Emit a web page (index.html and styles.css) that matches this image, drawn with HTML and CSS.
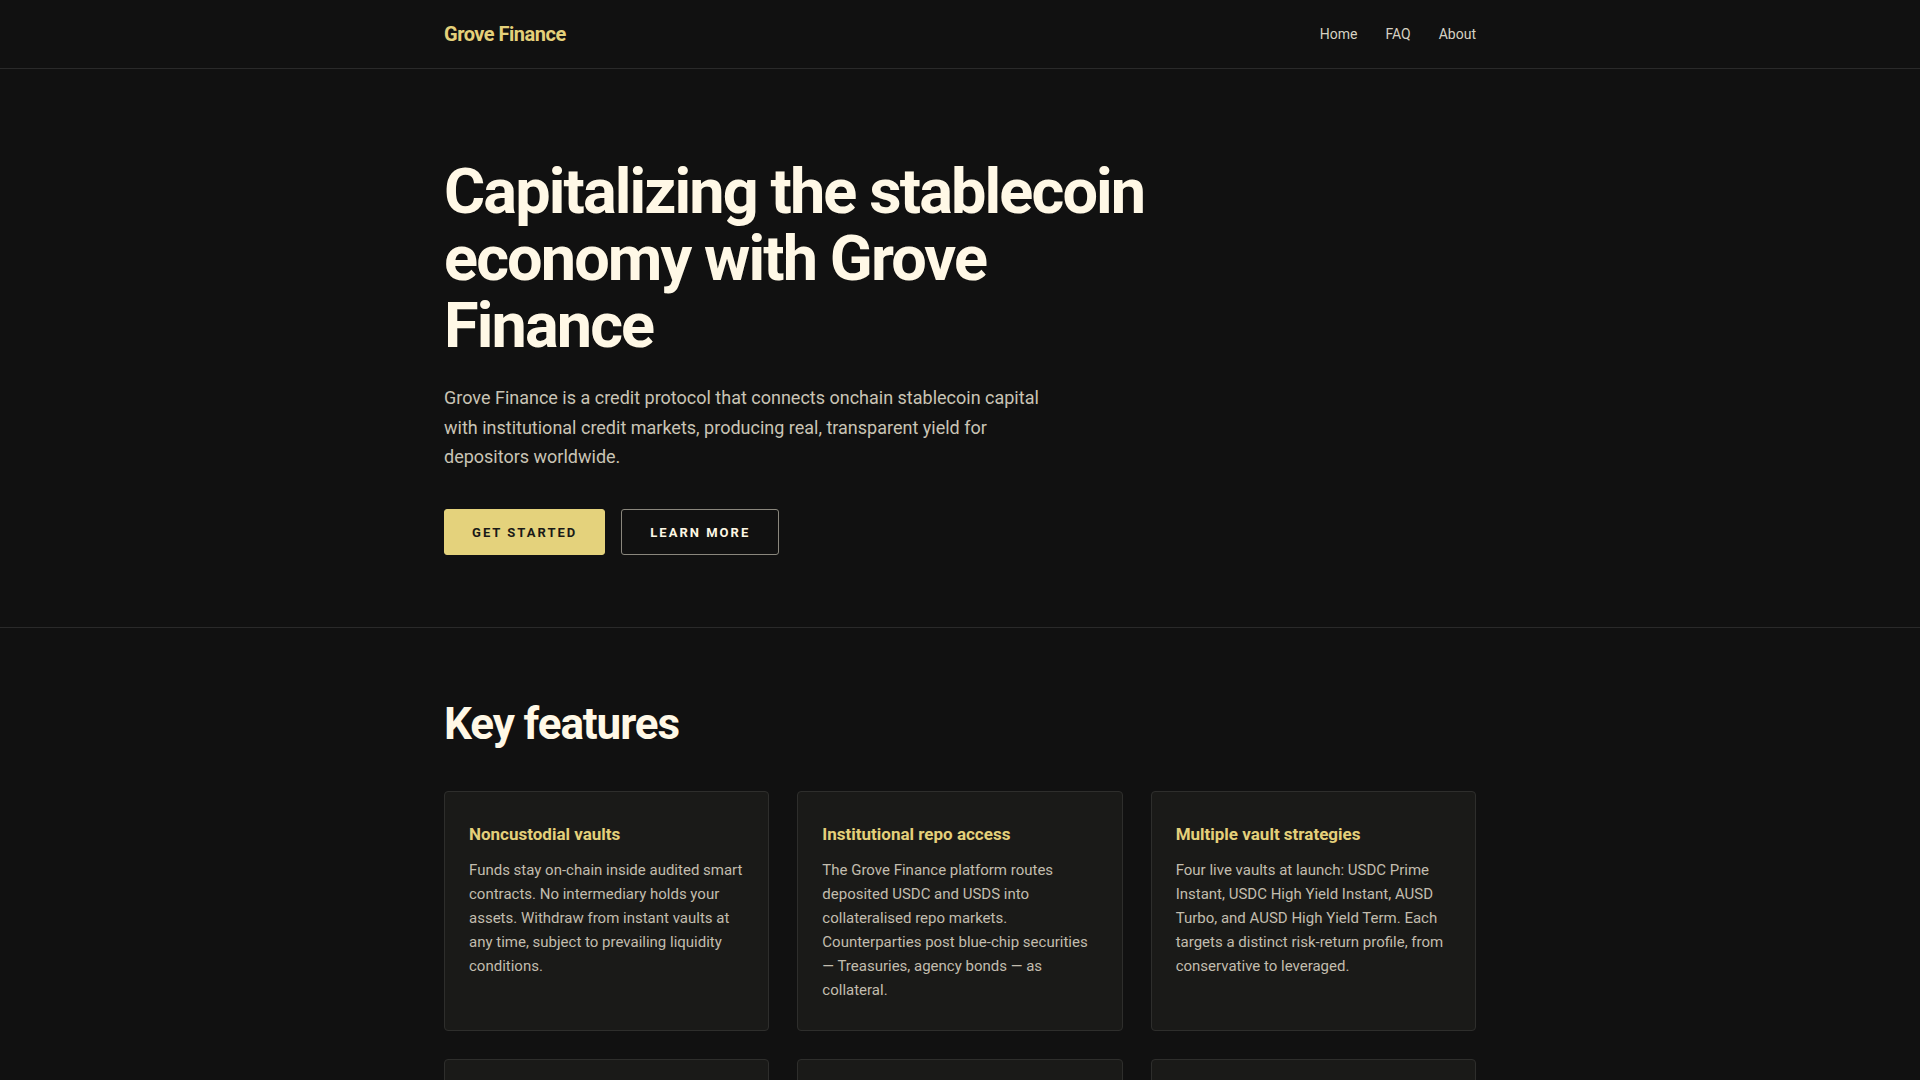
FILE: index.html
```html
<!DOCTYPE html>
<html lang="en">
<head>
<meta charset="utf-8">
<title>Grove Finance</title>
<link rel="stylesheet" href="styles.css">
</head>
<body>
<header class="site-header">
  <div class="container header-inner">
    <a class="logo" href="#">Grove Finance</a>
    <nav class="nav">
      <a href="#">Home</a>
      <a href="#">FAQ</a>
      <a href="#">About</a>
    </nav>
  </div>
</header>
<main>
  <section class="hero">
    <div class="container">
      <h1 class="hero-title">Capitalizing the stablecoin economy with Grove Finance</h1>
      <p class="hero-text">Grove Finance is a credit protocol that connects onchain stablecoin capital with institutional credit markets, producing real, transparent yield for depositors worldwide.</p>
      <div class="hero-actions">
        <a class="btn btn-primary" href="#">Get started</a>
        <a class="btn btn-outline" href="#">Learn more</a>
      </div>
    </div>
  </section>
  <section class="features">
    <div class="container">
      <h2 class="section-title">Key features</h2>
      <div class="feature-grid">
        <article class="card">
          <h3 class="card-title">Noncustodial vaults</h3>
          <p class="card-text">Funds stay on-chain inside audited smart contracts. No intermediary holds your assets. Withdraw from instant vaults at any time, subject to prevailing liquidity conditions.</p>
        </article>
        <article class="card">
          <h3 class="card-title">Institutional repo access</h3>
          <p class="card-text">The Grove Finance platform routes deposited USDC and USDS into collateralised repo markets. Counterparties post blue-chip securities — Treasuries, agency bonds — as collateral.</p>
        </article>
        <article class="card">
          <h3 class="card-title">Multiple vault strategies</h3>
          <p class="card-text">Four live vaults at launch: USDC Prime Instant, USDC High Yield Instant, AUSD Turbo, and AUSD High Yield Term. Each targets a distinct risk-return profile, from conservative to leveraged.</p>
        </article>
        <article class="card">
          <h3 class="card-title">Transparent reporting</h3>
          <p class="card-text">Positions, collateral and yield are published on-chain and updated daily, so depositors can verify every allocation.</p>
        </article>
        <article class="card">
          <h3 class="card-title">Risk management</h3>
          <p class="card-text">Conservative haircuts, daily margining and diversified counterparties help protect principal across market cycles.</p>
        </article>
        <article class="card">
          <h3 class="card-title">Global access</h3>
          <p class="card-text">Anyone with a wallet can deposit stablecoins and earn institutional-grade yield from anywhere in the world.</p>
        </article>
      </div>
    </div>
  </section>
</main>
</body>
</html>
```
FILE: styles.css
```css
* {
  box-sizing: border-box;
}

html, body {
  margin: 0;
  padding: 0;
}

body {
  background: #111111;
  color: #fdf7e4;
  font-family: Roboto, "Noto Sans", "Liberation Sans", sans-serif;
  -webkit-font-smoothing: antialiased;
}

a {
  text-decoration: none;
  color: inherit;
}

.container {
  max-width: 1080px;
  margin: 0 auto;
  padding: 0 24px;
}

.site-header {
  border-bottom: 1px solid #2a2a2a;
}

.header-inner {
  height: 68px;
  display: flex;
  align-items: center;
  justify-content: space-between;
}

.logo {
  color: #e4d07a;
  font-size: 20px;
  font-weight: 700;
  letter-spacing: -0.025em;
}

.nav {
  display: flex;
  gap: 28px;
}

.nav a {
  font-size: 14px;
  color: #d6d1c2;
}

.hero {
  padding: 89px 0 72px;
  border-bottom: 1px solid #2a2a2a;
}

.hero-title {
  margin: 0;
  max-width: 760px;
  font-size: 63px;
  line-height: 67px;
  font-weight: 700;
  letter-spacing: -0.03em;
  color: #fff8e6;
}

.hero-text {
  margin: 24px 0 0;
  max-width: 600px;
  font-size: 18px;
  line-height: 1.65;
  color: #c9c4b5;
}

.hero-actions {
  margin-top: 37px;
  display: flex;
  gap: 16px;
}

.btn {
  display: inline-flex;
  align-items: center;
  justify-content: center;
  height: 46px;
  padding: 0 27px;
  border-radius: 3px;
  font-size: 13px;
  font-weight: 700;
  letter-spacing: 0.155em;
  text-transform: uppercase;
  border: 1px solid transparent;
}

.btn-primary {
  background: #e4d27c;
  border-color: #e4d27c;
  color: #1a1a17;
}

.btn-outline {
  border-color: #8a877d;
  color: #fdf7e4;
  padding: 0 28px;
}

.features {
  padding: 72px 0 80px;
}

.section-title {
  margin: 0 0 43px;
  font-size: 44px;
  line-height: 1.1;
  font-weight: 700;
  letter-spacing: -0.025em;
  color: #fff8e6;
}

.feature-grid {
  display: grid;
  grid-template-columns: repeat(3, 1fr);
  gap: 28px;
}

.card {
  background: #1a1a18;
  border: 1px solid #2e2e2c;
  border-radius: 4px;
  padding: 31px 24px 27px;
  min-height: 240px;
}

.card-title {
  margin: 0 0 14px;
  font-size: 17px;
  line-height: 22px;
  font-weight: 700;
  color: #e4d07a;
}

.card-text {
  margin: 0;
  font-size: 15px;
  line-height: 23.9px;
  color: #c2bdae;
}
```
